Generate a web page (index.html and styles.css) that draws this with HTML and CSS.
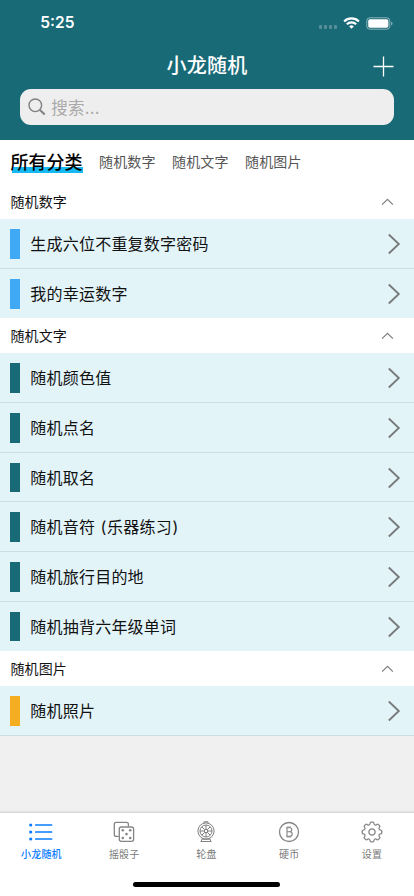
FILE: index.html
```html
<!DOCTYPE html>
<html lang="zh-CN">
<head>
<meta charset="utf-8">
<meta name="viewport" content="width=device-width, initial-scale=1">
<title>小龙随机</title>
<link rel="stylesheet" href="styles.css">
</head>
<body>
<svg width="0" height="0" class="defs" aria-hidden="true">
  <symbol id="chevron" viewBox="0 0 14 22"><path d="M1.8 1.5 11.8 11 1.8 20.5" fill="none" stroke="#777b7c" stroke-width="1.9"/></symbol>
  <symbol id="up" viewBox="0 0 14 8"><path d="M1.2 6.8 7 1.2 12.8 6.8" fill="none" stroke="#808080" stroke-width="1.4"/></symbol>
</svg>
<div class="app">
  <header class="header">
    <div class="status">
      <span class="time">5:25</span>
      <span class="signal"><i></i><i></i><i></i><i></i></span>
      <svg class="wifi" width="17" height="12" viewBox="0 0 17 12" fill="none" stroke="#fff" stroke-width="2.1">
        <path d="M1.1 4.4a10.6 10.6 0 0 1 14.8 0M3.8 7.3a6.7 6.7 0 0 1 9.4 0"/>
        <path d="M8.5 11.7 6.2 9.4a3.3 3.3 0 0 1 4.6 0z" fill="#fff" stroke="none"/>
      </svg>
      <svg class="battery" width="27" height="13" viewBox="0 0 27 13">
        <rect x=".8" y=".8" width="23" height="11.4" rx="3" fill="none" stroke="#fff" stroke-opacity=".5"/>
        <rect x="2.2" y="2.2" width="20.2" height="8.6" rx="1.7" fill="#fff"/>
        <path d="M25.2 4.5q1.3.6 1.3 2t-1.3 2z" fill="#fff" fill-opacity=".5"/>
      </svg>
    </div>
    <div class="navbar">
      <h1 class="title">小龙随机</h1>
      <svg class="add" width="21" height="21" viewBox="0 0 21 21"><path d="M10.5.5v20M.5 10.5h20" stroke="#fff" stroke-width="1.3"/></svg>
    </div>
    <div class="search">
      <svg width="18" height="18" viewBox="0 0 18 18" fill="none" stroke="#7f8285"><circle cx="7.3" cy="7.3" r="6.3" stroke-width="1.4"/><path d="m12 12 4.7 4.5" stroke-width="2"/></svg>
      <span>搜索...</span>
    </div>
  </header>

  <nav class="cats">
    <span class="cat active">所有分类</span>
    <span class="cat">随机数字</span>
    <span class="cat">随机文字</span>
    <span class="cat">随机图片</span>
  </nav>

  <main class="list">
    <section class="blue">
      <h2 class="section"><span>随机数字</span><svg class="up"><use href="#up"/></svg></h2>
      <div class="row"><span class="bar"></span><span class="name">生成六位不重复数字密码</span><svg class="chev"><use href="#chevron"/></svg></div>
      <div class="row"><span class="bar"></span><span class="name">我的幸运数字</span><svg class="chev"><use href="#chevron"/></svg></div>
    </section>
    <section class="teal">
      <h2 class="section"><span>随机文字</span><svg class="up"><use href="#up"/></svg></h2>
      <div class="row"><span class="bar"></span><span class="name">随机颜色值</span><svg class="chev"><use href="#chevron"/></svg></div>
      <div class="row"><span class="bar"></span><span class="name">随机点名</span><svg class="chev"><use href="#chevron"/></svg></div>
      <div class="row"><span class="bar"></span><span class="name">随机取名</span><svg class="chev"><use href="#chevron"/></svg></div>
      <div class="row"><span class="bar"></span><span class="name">随机音符 <span class="paren">(</span>乐器练习<span class="paren">)</span></span><svg class="chev"><use href="#chevron"/></svg></div>
      <div class="row"><span class="bar"></span><span class="name">随机旅行目的地</span><svg class="chev"><use href="#chevron"/></svg></div>
      <div class="row"><span class="bar"></span><span class="name">随机抽背六年级单词</span><svg class="chev"><use href="#chevron"/></svg></div>
    </section>
    <section class="orange">
      <h2 class="section"><span>随机图片</span><svg class="up"><use href="#up"/></svg></h2>
      <div class="row"><span class="bar"></span><span class="name">随机照片</span><svg class="chev"><use href="#chevron"/></svg></div>
    </section>
  </main>

  <footer class="footer">
    <nav class="tabs">
      <div class="tab on">
        <svg width="24" height="22" viewBox="0 0 24 22"><g fill="#0a7cff"><circle cx="1.7" cy="4" r="1.6"/><circle cx="1.7" cy="11" r="1.6"/><circle cx="1.7" cy="18" r="1.6"/></g><path d="M6.8 4h15.8M6.8 11h15.8M6.8 18h15.8" stroke="#0a7cff" stroke-width="1.7" stroke-linecap="round"/></svg>
        <span>小龙随机</span>
      </div>
      <div class="tab">
        <svg width="22" height="22" viewBox="0 0 22 22" fill="none" stroke="#858585" stroke-width="1.3"><path d="M5.7 15.4H3.2Q1.3 15.4 1.3 13.5V3.2Q1.3 1.3 3.2 1.3H13.5Q15.4 1.3 15.4 3.2V5.4"/><rect x="6.3" y="6" width="14.3" height="14.3" rx="2"/><g fill="#858585" stroke="none"><circle cx="9.8" cy="9.3" r="1.3"/><circle cx="17.2" cy="9.3" r="1.3"/><circle cx="13.5" cy="13.1" r="1.3"/><circle cx="9.8" cy="17" r="1.3"/><circle cx="17.2" cy="17" r="1.3"/></g></svg>
        <span>摇骰子</span>
      </div>
      <div class="tab">
        <svg width="22" height="22" viewBox="0 0 22 22" fill="none" stroke="#808080" stroke-width="1"><circle cx="11" cy="10" r="8.1"/><circle cx="11" cy="10" r="6"/><circle cx="11" cy="10" r="1.7"/><path d="M11 4v4.3M11 11.7V16M5 10h4.3M12.7 10H17M6.8 5.8l3 3M12.2 11.2l3 3M15.2 5.8l-3 3M9.8 11.2l-3 3M9 2.2V.8h4v1.4M7.3 17.3 6.3 20M14.7 17.3l1 2.7M7.2 18.2h7.6M5.5 20.5h11"/></svg>
        <span>轮盘</span>
      </div>
      <div class="tab">
        <svg width="22" height="22" viewBox="0 0 22 22" fill="none" stroke="#858585" stroke-width="1.2"><circle cx="11" cy="11" r="9.5" stroke-width="1.3"/><path d="M7.9 6.7h3.7q2.2 0 2.2 2t-2.2 2H9M11.6 10.7q2.6 0 2.6 2.3t-2.6 2.3H7.9M9 6.7v8.6M10 5.2v1.5M12 5.2v1.5M10 15.3v1.5M12 15.3v1.5" stroke-width="1.1"/></svg>
        <span>硬币</span>
      </div>
      <div class="tab">
        <svg width="22" height="22" viewBox="-11 -11 22 22" fill="none" stroke="#858585" stroke-width="1.3">
          <g id="teeth"><path id="tooth" d="M-2.9-7Q-2.2-7.3-1.9-8.6Q-1.7-9.8-1-9.8H1Q1.7-9.8 1.9-8.6Q2.2-7.3 2.9-7"/><use href="#tooth" transform="rotate(45)"/><use href="#tooth" transform="rotate(90)"/><use href="#tooth" transform="rotate(135)"/></g>
          <use href="#teeth" transform="rotate(180)"/><circle r="3.1"/>
        </svg>
        <span>设置</span>
      </div>
    </nav>
    <div class="home"></div>
  </footer>
</div>
</body>
</html>
```
FILE: styles.css
```css
* { box-sizing: border-box; }
body { margin: 0; font-family: Inter, "Noto Sans CJK SC", sans-serif; color: #111; }
svg { display: block; flex: none; }
.defs { position: absolute; }
.app { width: 414px; height: 896px; display: flex; flex-direction: column; background: #f0f0f0; overflow: hidden; }
.header { height: 140.4px; flex: none; background: #186a77; color: #fff; }
.status { height: 44px; display: flex; align-items: center; padding: 2px 21px 0 40.3px; }
.time { font-size: 15.5px; font-weight: 600; letter-spacing: 0; line-height: 20px; }
.signal { display: flex; gap: 1.7px; margin: 8px 6px 0 auto; }
.signal i { width: 3.3px; height: 3.3px; border-radius: 1px; background: #578e98; }
.wifi { margin-right: 6px; }
.navbar { height: 45.3px; display: grid; grid-template-columns: 1fr auto 1fr; align-items: center; padding: 0 20px; }
.title { grid-column: 2; margin: -1px 0 0; font-size: 20px; font-weight: 500; letter-spacing: .2px; line-height: 30px; }
.add { justify-self: end; }
.search { margin: 0 20.2px; height: 36px; border-radius: 11px; background: #eee; display: flex; align-items: center; padding-left: 7.5px; gap: 5.5px; color: #aaa; font-size: 16.5px; letter-spacing: .25px; }
.cats { height: 43.6px; flex: none; background: #fff; display: flex; align-items: center; padding-left: 10.5px; gap: 16.6px; }
.cat { font-size: 14px; letter-spacing: .1px; line-height: 20px; color: #555; }
.active { font-size: 18px; font-weight: 500; letter-spacing: 0; line-height: 22px; margin-top: 2px; color: #000; background: linear-gradient(#17b9f2, #17b9f2) 1px 15px / 71px 6px no-repeat; }
.section { margin: 0; height: 35px; background: #fff; display: flex; align-items: center; justify-content: space-between; padding: 0 20px 1px 10.5px; font-size: 14px; font-weight: 400; letter-spacing: .1px; }
.up { width: 13px; height: 8px; margin-top: 2px; }
.row { height: 49.67px; background: #e3f4f9; border-bottom: 1px solid #cbdfe5; display: flex; align-items: center; padding: 1.4px 13.5px 0 10.3px; }
section:not(.orange) .row:last-child { border-color: #e3f4f9; }
.bar { width: 10.2px; height: 29.7px; margin-right: 9.8px; }
.blue .bar { background: #3fa9f5; }
.teal .bar { background: #186a77; }
.orange .bar { background: #f5ae22; }
.name { flex: 1; font-size: 16px; letter-spacing: .22px; line-height: 24px; }
.paren { letter-spacing: .7px; margin-left: .6px; }
.chev { width: 14px; height: 22px; }
.footer { margin-top: auto; height: 84px; background: #fff; border-top: 1px solid #dadada; box-shadow: 0 -1px 1px #e4e4e4; display: flex; flex-direction: column; align-items: center; }
.tabs { width: 414px; flex: none; display: grid; grid-template-columns: repeat(5, 1fr); padding-top: 8px; }
.tab { display: flex; flex-direction: column; align-items: center; color: #7a7a7a; font-size: 10px; font-weight: 400; letter-spacing: .15px; line-height: 14px; gap: 4px; }
.tab:nth-child(n+3) { margin-left: -1.2px; }
.on { color: #0a7cff; font-weight: 500; }
.home { width: 147px; height: 5px; border-radius: 3px; background: #000; margin: 21px 1px 0 0; }
```
